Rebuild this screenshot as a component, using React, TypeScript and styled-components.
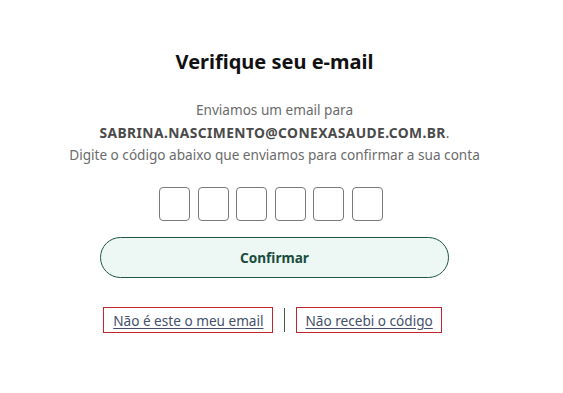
import { createGlobalStyle, styled } from 'styled-components';

const GlobalStyle = createGlobalStyle`
  body {
    margin: 0;
    background: #ffffff;
    font-family: 'Noto Sans', 'Liberation Sans', sans-serif;
  }
`;

const Page = styled.div`
  display: flex;
  flex-direction: column;
  align-items: center;
  padding-top: 48px;
  width: 549px;
`;

const Title = styled.h1`
  margin: 0;
  font-size: 20px;
  line-height: 28px;
  font-weight: 700;
  color: #111111;
`;

const Info = styled.p`
  margin: 23px 0 0;
  text-align: center;
  font-size: 13.6px;
  line-height: 22.5px;
  color: #6b6b6b;
`;

const Email = styled.strong`
  font-weight: 700;
  font-size: 13.8px;
  letter-spacing: 0.4px;
  color: #4a4a4a;
`;

const CodeRow = styled.div`
  display: flex;
  gap: 7.6px;
  margin: 20px 7px 0 0;
`;

const CodeBox = styled.input`
  width: 31px;
  height: 34px;
  box-sizing: border-box;
  border: 1px solid #7a7a7a;
  border-radius: 4px;
  padding: 0;
  text-align: center;
  font-size: 16px;
  background: #ffffff;
`;

const ConfirmButton = styled.button`
  margin-top: 16px;
  width: 349px;
  height: 41px;
  border: 1px solid #1f5646;
  border-radius: 21px;
  background: #edf7f3;
  color: #1b4d3e;
  font-family: inherit;
  font-size: 13.6px;
  font-weight: 700;
  cursor: pointer;
`;

const LinkRow = styled.div`
  display: flex;
  align-items: center;
  gap: 11px;
  margin: 29px 4px 0 0;
`;

const TextLink = styled.a`
  display: block;
  box-sizing: border-box;
  border: 1px solid #c0262d;
  padding: 2px 8px 0 9px;
  height: 26px;
  line-height: 22px;
  font-size: 13.6px;
  color: #45516b;
  text-decoration: underline;
  text-underline-offset: 2px;
  cursor: pointer;
`;

const Divider = styled.span`
  width: 1px;
  height: 24px;
  background: #555555;
`;

export default function App() {
  return (
    <>
      <GlobalStyle />
      <Page>
        <Title>Verifique seu e-mail</Title>
        <Info>
          Enviamos um email para
          <br />
          <Email>SABRINA.NASCIMENTO@CONEXASAUDE.COM.BR</Email>.
          <br />
          Digite o código abaixo que enviamos para confirmar a sua conta
        </Info>
        <CodeRow>
          {[0, 1, 2, 3, 4, 5].map((i) => (
            <CodeBox key={i} maxLength={1} aria-label={`Dígito ${i + 1}`} />
          ))}
        </CodeRow>
        <ConfirmButton type="button">Confirmar</ConfirmButton>
        <LinkRow>
          <TextLink>Não é este o meu email</TextLink>
          <Divider />
          <TextLink>Não recebi o código</TextLink>
        </LinkRow>
      </Page>
    </>
  );
}
